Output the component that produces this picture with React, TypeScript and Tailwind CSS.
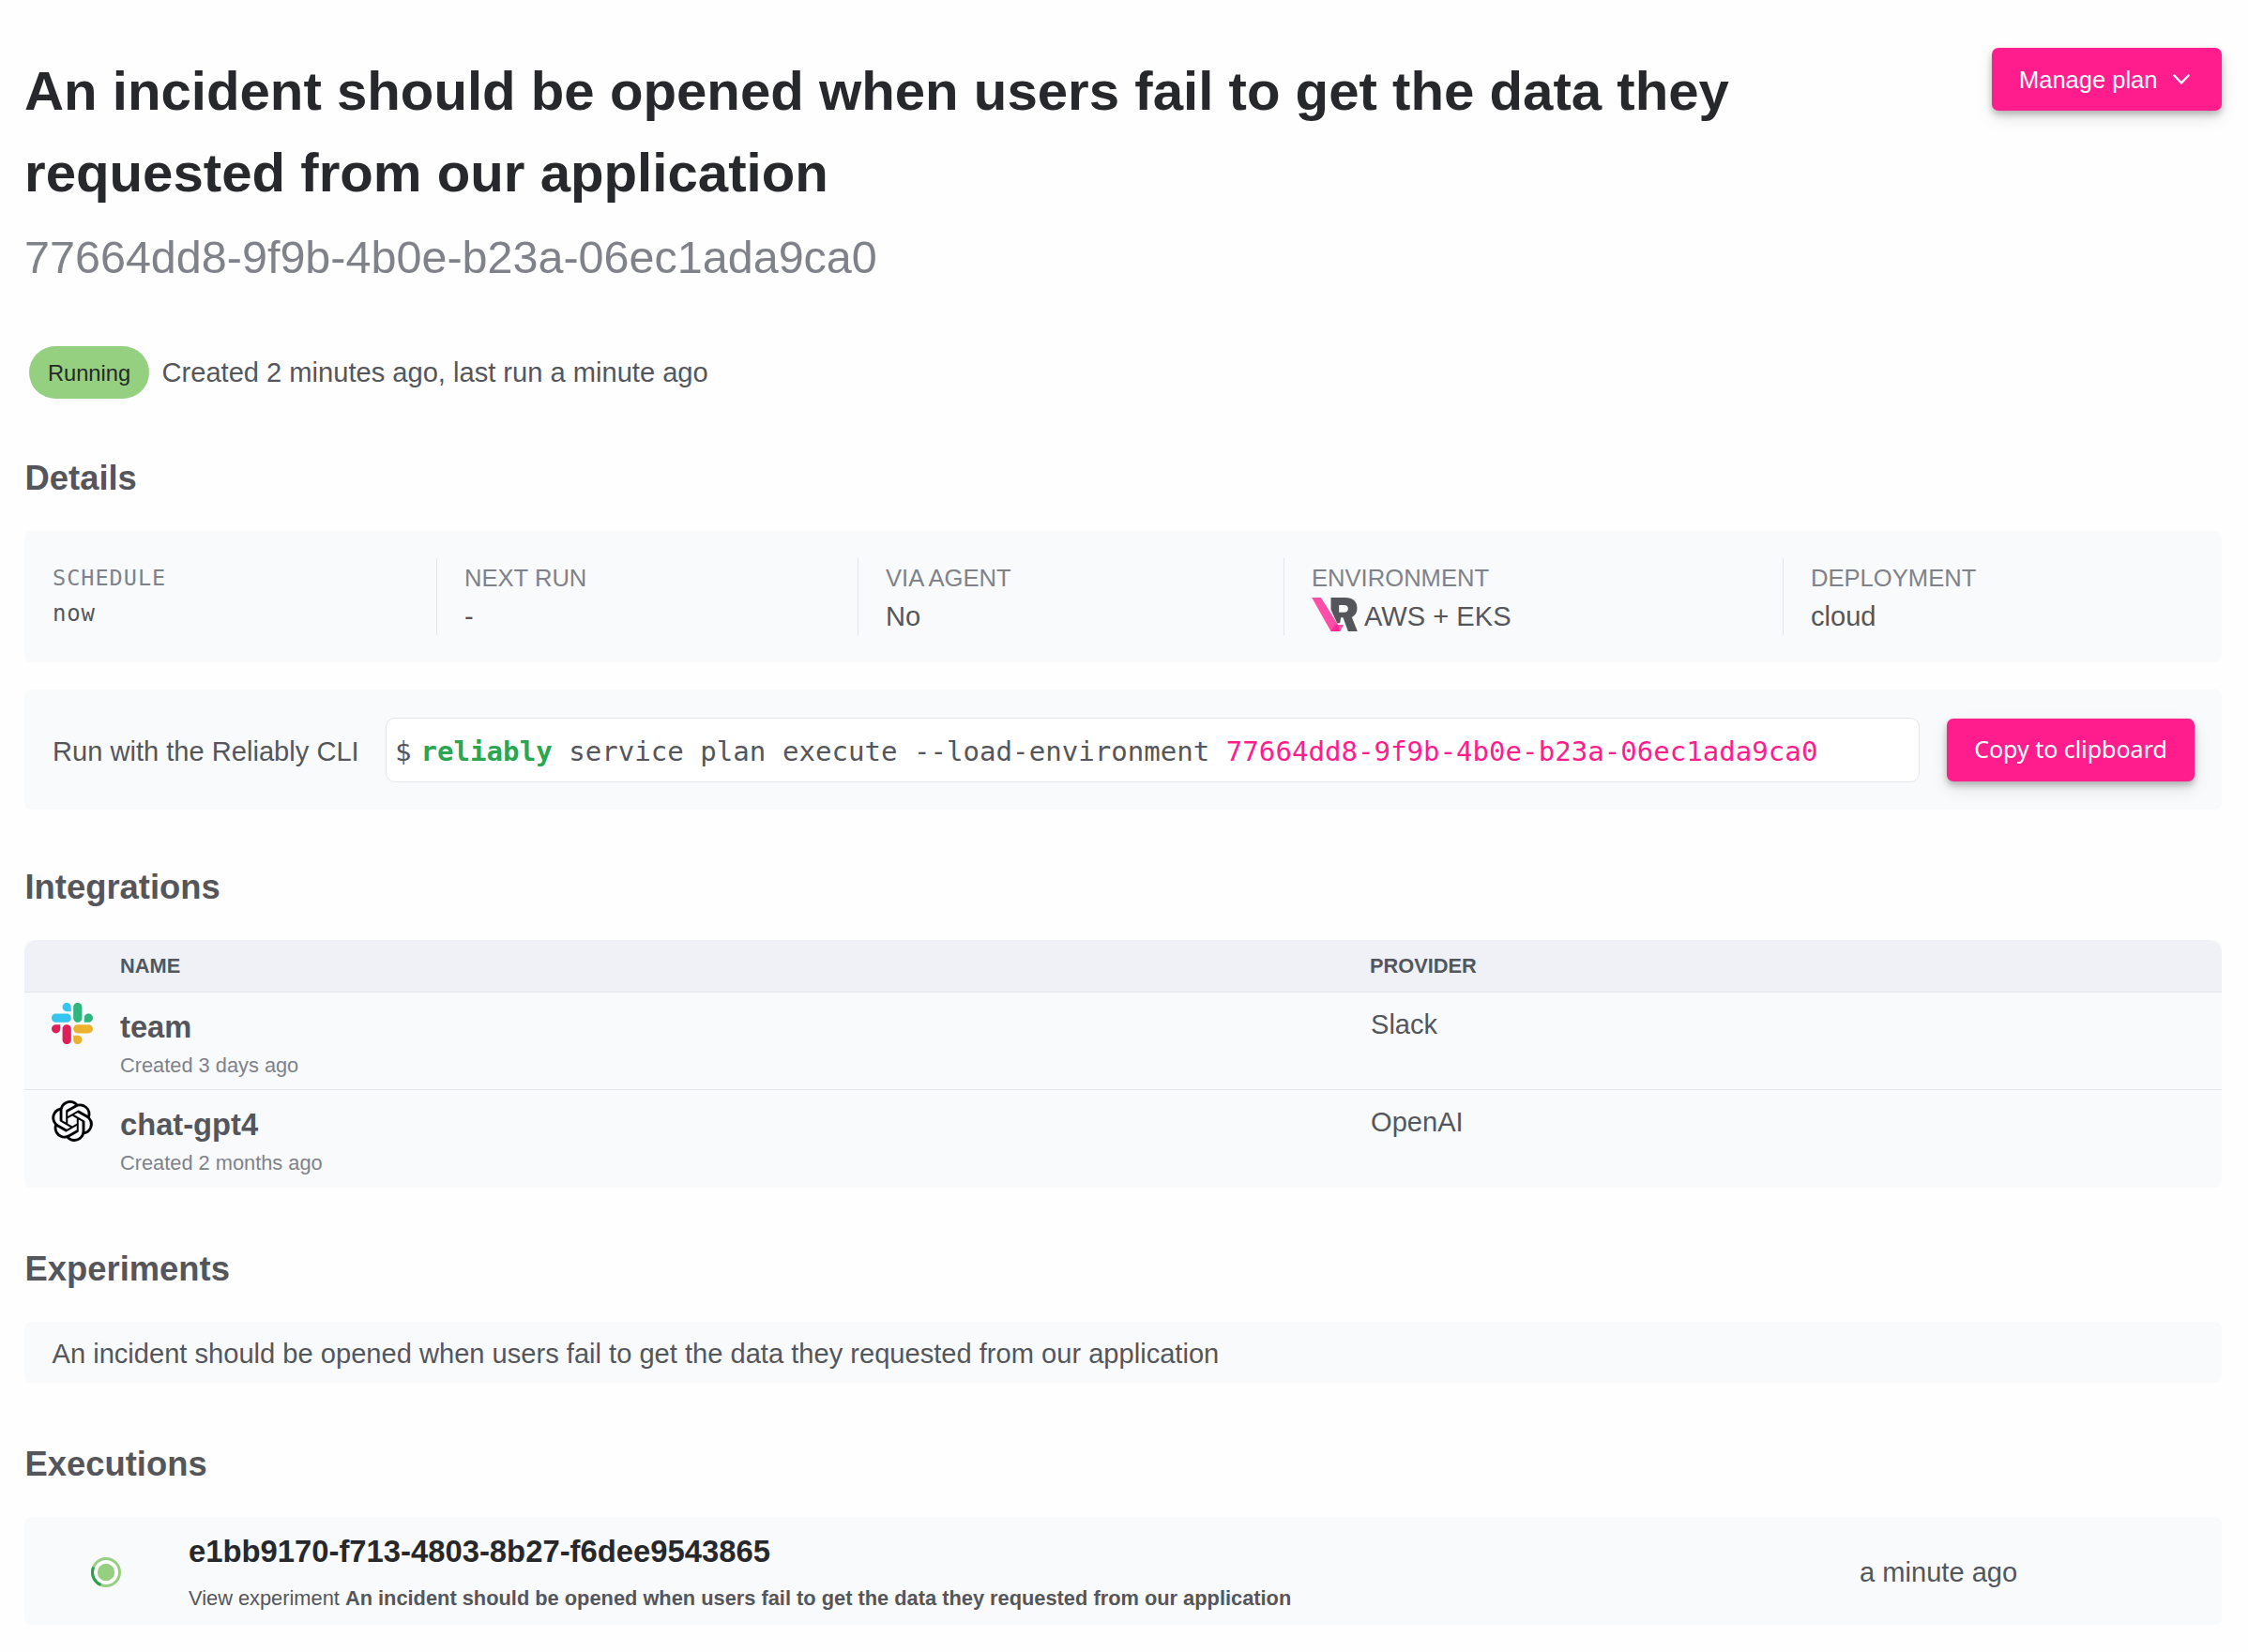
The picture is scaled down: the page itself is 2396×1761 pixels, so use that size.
import type { ReactNode } from "react";
import { SiOpenai } from "react-icons/si";

const PLAN_ID = "77664dd8-9f9b-4b0e-b23a-06ec1ada9ca0";
const EXPERIMENT =
  "An incident should be opened when users fail to get the data they requested from our application";

function ReliablyMark() {
  return (
    <svg viewBox="0 0 146 108" className="mb-[5px] h-9 w-[49px] shrink-0">
      <path d="M0 0H29L84 87L90 108H61Z" fill="#ff1d8e" fillOpacity="0.78" />
      <path d="M73 87H102L90 108H61Z" fill="#ff1d8e" fillOpacity="0.78" />
      <path
        fillRule="evenodd"
        fill="#55565b"
        d="M61 0H106C132 0 145 13 145 34C145 48 139 58 128 63L146 108H116L100 64H93L90 82H81L61 38ZM87 24V47H103C112 47 116 43 116 36C116 28 112 24 103 24Z"
      />
    </svg>
  );
}

function SlackMark() {
  return (
    <svg viewBox="0 0 122.8 122.8" className="size-11">
      <path fill="#e01e5a" d="M25.8 77.6c0 7.1-5.8 12.9-12.9 12.9S0 84.7 0 77.6s5.8-12.9 12.9-12.9h12.9v12.9zm6.5 0c0-7.1 5.8-12.9 12.9-12.9s12.9 5.8 12.9 12.9v32.3c0 7.1-5.8 12.9-12.9 12.9s-12.9-5.8-12.9-12.9V77.6z" />
      <path fill="#36c5f0" d="M45.2 25.8c-7.1 0-12.9-5.8-12.9-12.9S38.1 0 45.2 0s12.9 5.8 12.9 12.9v12.9H45.2zm0 6.5c7.1 0 12.9 5.8 12.9 12.9s-5.8 12.9-12.9 12.9H12.9C5.8 58.1 0 52.3 0 45.2s5.8-12.9 12.9-12.9h32.3z" />
      <path fill="#2eb67d" d="M97 45.2c0-7.1 5.8-12.9 12.9-12.9s12.9 5.8 12.9 12.9-5.8 12.9-12.9 12.9H97V45.2zm-6.5 0c0 7.1-5.8 12.9-12.9 12.9s-12.9-5.8-12.9-12.9V12.9C64.7 5.8 70.5 0 77.6 0s12.9 5.8 12.9 12.9v32.3z" />
      <path fill="#ecb22e" d="M77.6 97c7.1 0 12.9 5.8 12.9 12.9s-5.8 12.9-12.9 12.9-12.9-5.8-12.9-12.9V97h12.9zm0-6.5c-7.1 0-12.9-5.8-12.9-12.9s5.8-12.9 12.9-12.9h32.3c7.1 0 12.9 5.8 12.9 12.9s-5.8 12.9-12.9 12.9H77.6z" />
    </svg>
  );
}

function RunningMark() {
  return (
    <svg viewBox="0 0 32 32" className="mt-[3px] size-8">
      <circle cx="16" cy="16" r="14.5" fill="#fff" stroke="#95cf80" strokeWidth="3" />
      <path d="M2.6 10.5A14.5 14.5 0 0 0 10.5 29.4" fill="none" stroke="#27a24b" strokeWidth="3" />
      <circle cx="16" cy="16" r="9.2" fill="#95cf80" />
    </svg>
  );
}

function Heading({ children }: { children: ReactNode }) {
  return <h2 className="pl-[0.5px] text-[36.4px] leading-[55px] font-bold">{children}</h2>;
}

function Detail({ label, width, mono, first, children }: { label: string; width: string; mono?: boolean; first?: boolean; children: ReactNode }) {
  return (
    <div className={`${width} ${first ? "" : "border-l border-[#e3e5ea] pl-[29px]"} h-[82px]`}>
      {mono ? (
        <div className="pt-[3px] pl-px font-['DejaVu_Sans_Mono',monospace]">
          <div className="text-[23.5px] leading-[37px] tracking-[1px] text-[#80828a]">{label}</div>
          <div className="text-[24px] leading-[38px] tracking-[0.8px]">{children}</div>
        </div>
      ) : (
        <>
          <div className="pt-px text-[25.6px] leading-[40px] text-[#80828a]">{label}</div>
          <div className="flex h-[42px] items-center gap-[7px] text-[29.1px] leading-[42px] whitespace-nowrap">{children}</div>
        </>
      )}
    </div>
  );
}

function Integration({ icon, name, created, provider }: { icon: ReactNode; name: string; created: string; provider: string }) {
  return (
    <div className="flex h-[104px] border-t border-[#e3e5ea] last:h-[105px]">
      <div className="w-[102px] pt-[11px] pl-[29px]">{icon}</div>
      <div className="w-[1332px]">
        <div className="pt-[12px] text-[32.7px] leading-[50px] font-bold">{name}</div>
        <div className="text-[21.8px] leading-[32px] text-[#80828a]">{created}</div>
      </div>
      <div className="pt-[12px] pl-px text-[29.1px] leading-[44px]">{provider}</div>
    </div>
  );
}

export default function App() {
  return (
    <main className="h-[1761px] w-[2396px] overflow-hidden bg-[#fefefe] pr-7 pl-[26px] font-['Liberation_Sans',Arial,sans-serif] text-[29.1px] text-[#55565b]">
      <header className="flex h-[369px] items-start justify-between">
        <div className="pt-[53px]">
          <h1 className="w-[1900px] text-[58.2px] leading-[87.3px] font-bold text-[#27282b]">{EXPERIMENT}</h1>
          <p className="mt-[10px] text-[48.5px] leading-[73px] text-[#80828a]">{PLAN_ID}</p>
        </div>
        <button className="mt-[51px] flex h-[67px] w-[245px] items-center rounded-[7px] bg-[#ff1d8e] pt-px pl-[29px] text-[25.5px] text-white shadow-[0_4px_7px_rgba(0,0,0,0.24),0_8px_18px_rgba(0,0,0,0.1)]">
          Manage plan
          <svg viewBox="0 0 18 12" className="ml-[17px] h-3 w-[18px]" fill="none" stroke="white" strokeWidth="2.4" strokeLinecap="round" strokeLinejoin="round">
            <path d="M1.5 1.5L9 9.5L16.5 1.5" />
          </svg>
        </button>
      </header>

      <div className="flex h-[113px] items-start pl-[5px]">
        <span className="flex h-14 w-32 items-center justify-center rounded-full bg-[#95cf80] pt-[3px] text-[23.7px] text-[#27282b]">Running</span>
        <span className="ml-[13.5px] leading-[56px]">Created 2 minutes ago, last run a minute ago</span>
      </div>

      <section className="h-[436px]">
        <Heading>Details</Heading>
        <div className="mt-[29px] flex h-[140px] items-center rounded-[7px] bg-[#f8fafc] pb-0 pl-[29px]">
          <Detail label="SCHEDULE" width="w-[410px]" mono first>now</Detail>
          <Detail label="NEXT RUN" width="w-[449px]">-</Detail>
          <Detail label="VIA AGENT" width="w-[454px]">No</Detail>
          <Detail label="ENVIRONMENT" width="w-[532px]">
            <ReliablyMark />
            AWS + EKS
          </Detail>
          <Detail label="DEPLOYMENT" width="w-[400px]">cloud</Detail>
        </div>
        <div className="mt-[29px] flex h-[128px] items-center rounded-[7px] bg-[#f8fafc] px-[29px]">
          <span className="w-[356px] pt-[5px] pl-px whitespace-nowrap">Run with the Reliably CLI</span>
          <div className="flex h-[69px] flex-1 items-center rounded-[10px] border border-[#e3e5ea] bg-white pt-[5px] pl-[9px] font-['DejaVu_Sans_Mono',monospace] text-[29.1px] whitespace-pre">
            <span className="mr-[10px]">$</span>
            <b className="text-[#2aa650]">reliably</b>
            <span> service plan execute --load-environment </span>
            <span className="text-[#ff1d8e]">{PLAN_ID}</span>
          </div>
          <button className="ml-[29px] h-[67px] w-[264px] rounded-[7px] bg-[#ff1d8e] font-['Noto_Sans',sans-serif] text-[25px] text-white shadow-[0_4px_7px_rgba(0,0,0,0.24),0_8px_18px_rgba(0,0,0,0.1)]">
            Copy to clipboard
          </button>
        </div>
      </section>

      <section className="h-[407px]">
        <Heading>Integrations</Heading>
        <div className="mt-[29px] h-[264px] rounded-[7px] bg-[#f8fafc]">
          <div className="flex h-[55px] items-center rounded-t-[14px] bg-[#eff1f6] pt-[2px] pl-[102px] text-[21.8px] font-bold">
            <span className="w-[1332px]">NAME</span>
            <span>PROVIDER</span>
          </div>
          <Integration icon={<SlackMark />} name="team" created="Created 3 days ago" provider="Slack" />
          <Integration icon={<SiOpenai className="size-11 text-black" />} name="chat-gpt4" created="Created 2 months ago" provider="OpenAI" />
        </div>
      </section>

      <section className="h-[208px]">
        <Heading>Experiments</Heading>
        <div className="mt-[29px] h-[65px] rounded-[7px] bg-[#f8fafc] pl-[29.5px] leading-[68px]">{EXPERIMENT}</div>
      </section>

      <section>
        <Heading>Executions</Heading>
        <div className="mt-[29px] flex h-[115px] items-center rounded-[7px] bg-[#f8fafc] pl-[71px]">
          <RunningMark />
          <div className="ml-[72px] w-[1781px] pt-[2px]">
            <div className="text-[32.8px] leading-[50px] font-bold text-[#27282b]">e1bb9170-f713-4803-8b27-f6dee9543865</div>
            <div className="mt-[7px] text-[21.82px] leading-[36px] whitespace-nowrap">
              View experiment <b>{EXPERIMENT}</b>
            </div>
          </div>
          <span className="pt-[4px]">a minute ago</span>
        </div>
      </section>
    </main>
  );
}
